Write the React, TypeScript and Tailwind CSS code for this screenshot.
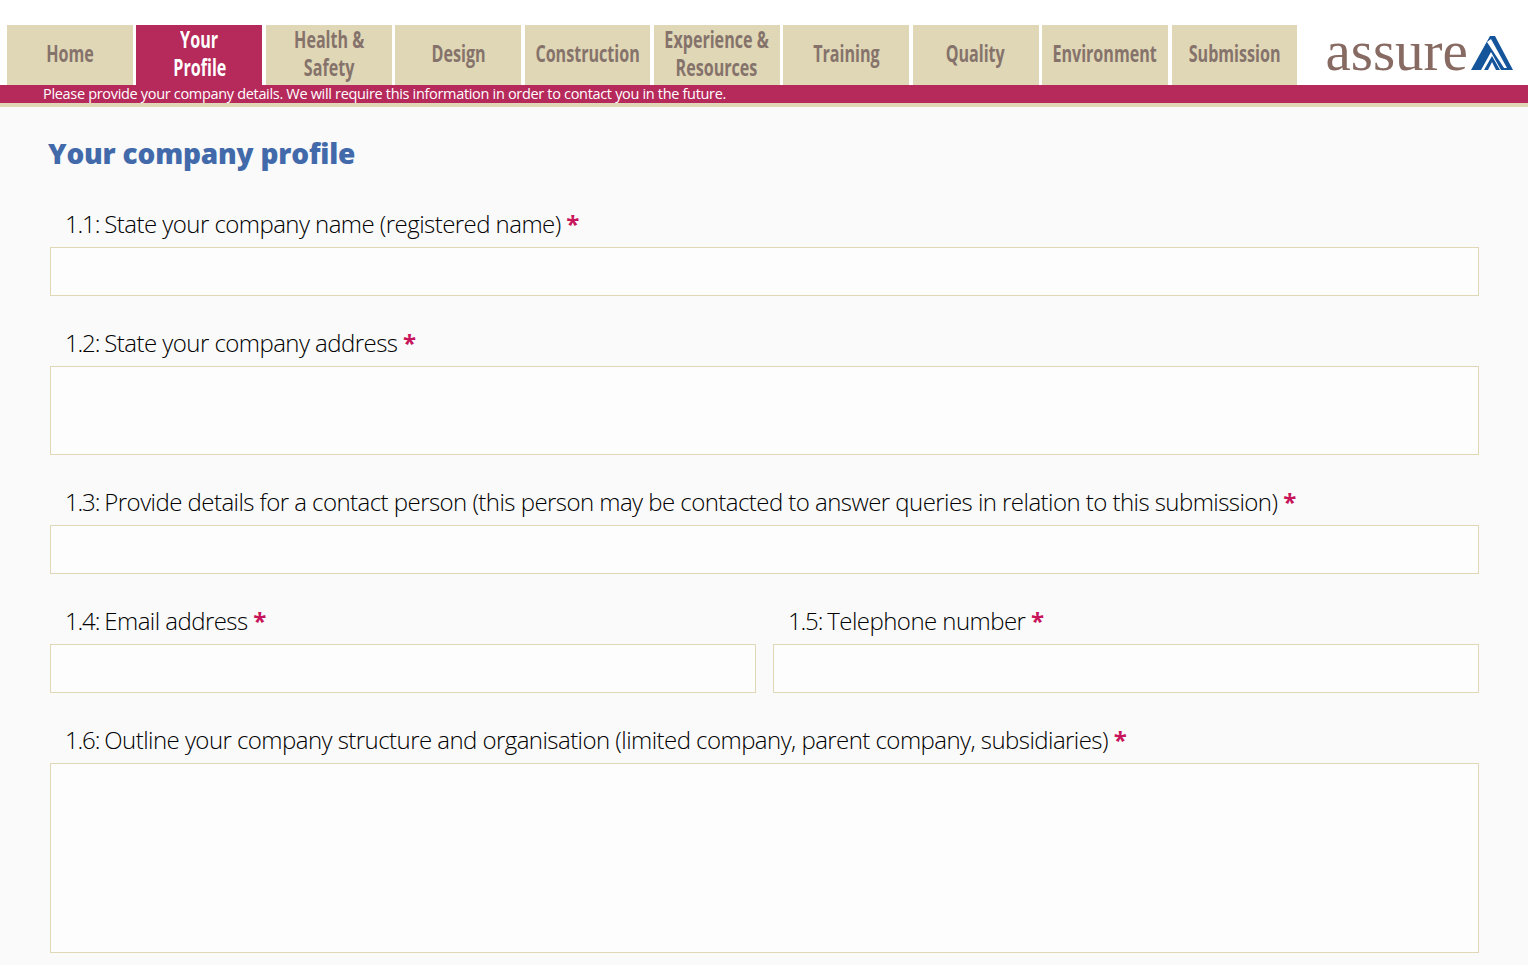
const tabs: [string, string?][] = [
  ["Home"],
  ["Your", "Profile"],
  ["Health &", "Safety"],
  ["Design"],
  ["Construction"],
  ["Experience &", "Resources"],
  ["Training"],
  ["Quality"],
  ["Environment"],
  ["Submission"],
];

function Logo() {
  return (
    <div className="flex items-center ml-[28px] h-[60px]">
      <span className="font-['Liberation_Serif',serif] text-[57px] leading-none text-[#876b63] mt-[-10px] w-[146px]">assure</span>
      <svg width="43" height="35" viewBox="0 0 43 35" className="mt-[-3px]">
        <path d="M0 34 L19 0 L24 0 L42 34 L30 34 L20 16 L10 34 Z" fill="#14549a" />
        <path d="M16 6 L20 3 L36 32 L33 32 Z" fill="#fff" />
        <path d="M13 34 L21 20 L29 34 L25 34 L21 26 L17 34 Z" fill="#14549a" />
      </svg>
    </div>
  );
}

function Tab({ lines, index }: { lines: [string, string?]; index: number }) {
  const active = index === 1;
  return (
    <div
      className={
        "w-[125.9px] h-[60px] pb-[4px] flex flex-col items-center justify-center font-['Open_Sans',sans-serif] font-bold text-[23px] leading-[28px] " +
        (active ? "bg-[#b6295b] text-white" : "bg-[#e0d7b6] text-[#85736b]")
      }
    >
      {lines.map((l) => (
        <span key={l} className="block whitespace-nowrap scale-x-[0.7]">
          {l}
        </span>
      ))}
    </div>
  );
}

function Label({ children }: { children: string }) {
  const i = children.indexOf(" ");
  return (
    <label className="block pl-[15px] h-[40px] text-[24px] leading-[34px] tracking-[-0.55px] font-light text-black whitespace-nowrap font-['Open_Sans',sans-serif]">
      <span className="tracking-[-1.15px]">{children.slice(0, i + 1)}</span>
      {children.slice(i + 1)} <span className="text-[#c8145a] font-bold">*</span>
    </label>
  );
}

function Field({ label, height }: { label: string; height: string }) {
  return (
    <div className="min-w-0 flex-1">
      <Label>{label}</Label>
      <div className={"bg-[#fdfdfd] border border-[#e0d7b6] " + height} />
    </div>
  );
}

export default function App() {
  return (
    <div className="w-[1528px] h-[965px] overflow-hidden bg-[#fafafa] font-['Open_Sans',sans-serif]">
      <header className="bg-white pt-[25px] pl-[7px]">
        <div className="flex items-start">
          <nav className="flex gap-[3.5px]">
            {tabs.map((t, i) => (
              <Tab key={t[0]} lines={t} index={i} />
            ))}
          </nav>
          <Logo />
        </div>
      </header>
      <div className="h-[22px] bg-[#b6295b] border-b-4 border-[#e0d7b6] pl-[43px] text-[14.5px] leading-[18px] tracking-[-0.32px] text-white whitespace-nowrap">
        Please provide your company details. We will require this information in order to contact you in the future.
      </div>
      <main className="pl-[50px] pr-[49px]">
        <h1 className="ml-[-2px] mt-[27px] h-[38px] text-[28px] leading-[38px] font-extrabold text-[#426aab] tracking-[-0.2px]">
          Your company profile
        </h1>
        <div className="mt-[35px] flex flex-col gap-[30px]">
          <Field label="1.1: State your company name (registered name)" height="h-[49px]" />
          <Field label="1.2: State your company address" height="h-[89px]" />
          <Field label="1.3: Provide details for a contact person (this person may be contacted to answer queries in relation to this submission)" height="h-[49px]" />
          <div className="flex gap-[17px]">
            <Field label="1.4: Email address" height="h-[49px]" />
            <Field label="1.5: Telephone number" height="h-[49px]" />
          </div>
          <Field label="1.6: Outline your company structure and organisation (limited company, parent company, subsidiaries)" height="h-[190px]" />
        </div>
      </main>
    </div>
  );
}
